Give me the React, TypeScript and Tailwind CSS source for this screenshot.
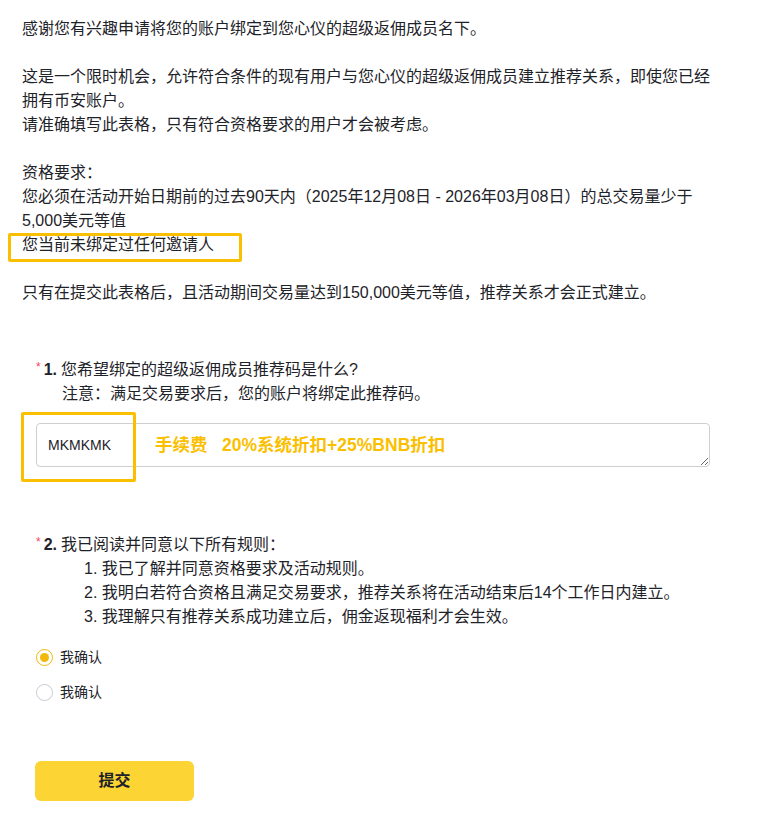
import React from 'react'

const FONT = '"Liberation Sans", "Noto Sans CJK SC", sans-serif'

function Radio({ checked, label }: { checked?: boolean; label: string }) {
  return (
    <label className="flex h-[24px] items-center gap-[7px]">
      <span
        className={
          checked
            ? 'flex h-[17px] w-[17px] items-center justify-center rounded-full border border-[#f0b90b] bg-white'
            : 'flex h-[17px] w-[17px] items-center justify-center rounded-full border border-[#c5cad3] bg-white'
        }
      >
        {checked && <span className="h-[9px] w-[9px] rounded-full bg-[#f0b90b]" />}
      </span>
      <span className="text-[14px] text-[#1e2329]">{label}</span>
    </label>
  )
}

export default function App() {
  return (
    <div className="min-h-[813px] bg-white text-[#1e2329]" style={{ fontFamily: FONT }}>
      <div className="px-[22px] pt-[17px] text-[16px] leading-6">
        <p>感谢您有兴趣申请将您的账户绑定到您心仪的超级返佣成员名下。</p>
        <p className="mt-6">
          这是一个限时机会，允许符合条件的现有用户与您心仪的超级返佣成员建立推荐关系，即使您已经
          <br />
          拥有币安账户。
          <br />
          请准确填写此表格，只有符合资格要求的用户才会被考虑。
        </p>
        <p className="mt-6">
          资格要求：
          <br />
          您必须在活动开始日期前的过去90天内（2025年12月08日 - 2026年03月08日）的总交易量少于
          <br />
          5,000美元等值
          <br />
          <span className="relative inline-block">
            您当前未绑定过任何邀请人
            <span className="absolute -left-[14px] top-0 h-[29px] w-[234px] rounded-[2px] border-[3px] border-[#fac000]" />
          </span>
        </p>
        <p className="mt-6">只有在提交此表格后，且活动期间交易量达到150,000美元等值，推荐关系才会正式建立。</p>
      </div>

      <div className="mt-[53px] pl-[36px] pr-[53px]">
        <div className="text-[16px] leading-6">
          <div className="flex">
            <span className="mr-[3px] mt-[-3px] text-[12px] text-[#f6465d]">*</span>
            <span className="mr-[4px] font-bold">1.</span>
            <span>您希望绑定的超级返佣成员推荐码是什么?</span>
          </div>
          <div className="pl-[26px]">注意：满足交易要求后，您的账户将绑定此推荐码。</div>
        </div>

        <div className="relative mt-[17px]">
          <textarea
            readOnly
            defaultValue="MKMKMK"
            className="block h-[44px] w-[674px] resize-y rounded-[4px] border border-[#cfcfcf] bg-white px-[11px] py-[11px] text-[14px] leading-[20px] text-[#1e2329] outline-none"
            style={{ fontFamily: FONT }}
          />
          <span className="pointer-events-none absolute -left-[15px] -top-[11px] h-[70px] w-[115px] rounded-[2px] border-[3px] border-[#fac000]" />
          <span className="pointer-events-none absolute left-[119px] top-[11px] text-[17.5px] font-bold leading-[22px] text-[#fac000]">
            手续费&nbsp;&nbsp;&nbsp;20%系统折扣+25%BNB折扣
          </span>
        </div>

        <div className="mt-[66px] text-[16px] leading-6">
          <div className="flex">
            <span className="mr-[3px] mt-[-3px] text-[12px] text-[#f6465d]">*</span>
            <span className="mr-[4px] font-bold">2.</span>
            <span>我已阅读并同意以下所有规则：</span>
          </div>
          <div className="pl-[48px]">
            <div>1. 我已了解并同意资格要求及活动规则。</div>
            <div>2. 我明白若符合资格且满足交易要求，推荐关系将在活动结束后14个工作日内建立。</div>
            <div>3. 我理解只有推荐关系成功建立后，佣金返现福利才会生效。</div>
          </div>
        </div>

        <div className="mt-[16px] flex flex-col gap-[11px]">
          <Radio checked label="我确认" />
          <Radio label="我确认" />
        </div>

        <button className="-ml-px mt-[57px] h-[40px] w-[159px] rounded-[6px] bg-[#fcd535] text-[16px] font-bold text-[#1e2329]" style={{ fontFamily: FONT }}>
          提交
        </button>
      </div>
    </div>
  )
}
